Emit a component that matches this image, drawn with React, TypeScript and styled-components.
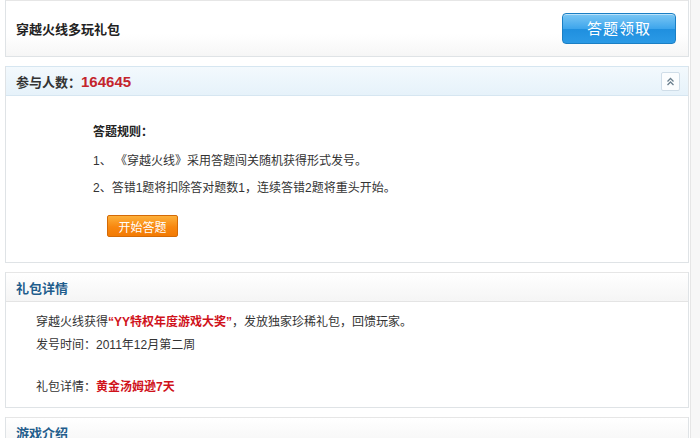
import React from "react";
import styled, { createGlobalStyle } from "styled-components";

const Global = createGlobalStyle`
  html, body { margin: 0; padding: 0; background: #fff; }
  body {
    font-family: "Liberation Sans", "Noto Sans CJK SC", sans-serif;
    font-size: 12px;
    color: #333;
  }
`;

const Page = styled.div`
  display: flex;
  width: 700px;
  height: 438px;
  overflow: hidden;
`;

const Main = styled.div`
  width: 684px;
  padding: 0 0 0 5px;
  display: flex;
  flex-direction: column;
  gap: 9px;
`;

const Side = styled.div`
  flex: 1;
  margin-left: 1px;
  border-left: 1px solid #e6e6e6;
  background: #f7f7f7;
`;

const Panel = styled.section`
  border: 1px solid #dfe3e6;
  border-top: none;
  background: #fff;
`;

const TopBar = styled.div`
  height: 55px;
  display: flex;
  align-items: center;
  justify-content: space-between;
  padding: 0 12px 0 10px;
  background: linear-gradient(#ffffff 60%, #f6f6f6);
  border-top: 1px solid #e6e6e6;
`;

const Title = styled.h1`
  margin: 0;
  font-size: 13px;
  font-weight: bold;
  color: #222;
`;

const BlueButton = styled.button`
  width: 114px;
  height: 31px;
  border: 1px solid #1b7fc4;
  border-radius: 4px;
  background: linear-gradient(#7cc7f4, #3ea6ec 50%, #1f8fdf 51%, #2b9ae6);
  color: #fff;
  font-family: inherit;
  font-size: 15px;
  letter-spacing: 1px;
  padding: 0 0 2px;
  box-shadow: inset 0 1px 0 rgba(255,255,255,0.5);
`;

const Header = styled.div<{ $tone: "blue" | "gray" }>`
  height: 28px;
  display: flex;
  align-items: center;
  justify-content: space-between;
  padding: 0 8px 0 10px;
  border-top: 1px solid ${(p) => (p.$tone === "blue" ? "#d6e6f1" : "#e6e6e6")};
  border-bottom: 1px solid ${(p) => (p.$tone === "blue" ? "#d6e6f1" : "#e4e4e4")};
  background: ${(p) =>
    p.$tone === "blue"
      ? "linear-gradient(#f3f9fd, #e6f2fa)"
      : "linear-gradient(#ffffff, #f5f5f5)"};
`;

const HeadText = styled.h2<{ $blue?: boolean }>`
  margin: 0;
  font-size: 13px;
  font-weight: bold;
  color: ${(p) => (p.$blue ? "#1f5d8c" : "#333")};
`;

const Count = styled.span`
  color: #c4242c;
  font-family: "Liberation Sans", sans-serif;
  font-size: 15px;
`;

const Toggle = styled.button`
  width: 19px;
  height: 19px;
  padding: 0;
  border: 1px solid #cfdde8;
  border-radius: 2px;
  background: #fbfdfe;
  display: flex;
  align-items: center;
  justify-content: center;
`;

const RuleBody = styled.div`
  padding: 25px 0 25px 87px;
  display: flex;
  flex-direction: column;
`;

const RuleTitle = styled.div`
  font-weight: bold;
  color: #222;
  line-height: 22px;
  margin-bottom: 5px;
`;

const Line = styled.p`
  margin: 0;
  line-height: 27px;
  color: #333;
`;

const OrangeButton = styled.button`
  align-self: flex-start;
  margin: 13px 0 0 14px;
  width: 71px;
  height: 22px;
  border: 1px solid #d46a06;
  border-radius: 2px;
  background: linear-gradient(#fdb03a, #f8870f 55%, #f27a04);
  color: #fff;
  font-family: inherit;
  font-size: 12px;
  padding: 0;
`;

const DetailBody = styled.div`
  padding: 9px 0 8px 30px;
`;

const DLine = styled.p<{ $gap?: boolean }>`
  margin: ${(p) => (p.$gap ? "19px 0 0" : "0")};
  line-height: 23px;
  color: #333;
`;

const Red = styled.b`
  color: #d0121b;
`;

export default function App() {
  return (
    <>
      <Global />
      <Page>
        <Main>
          <Panel>
            <TopBar>
              <Title>穿越火线多玩礼包</Title>
              <BlueButton>答题领取</BlueButton>
            </TopBar>
          </Panel>
          <Panel>
            <Header $tone="blue">
              <HeadText>
                参与人数：<Count>164645</Count>
              </HeadText>
              <Toggle aria-label="收起">
                <svg width="9" height="9" viewBox="0 0 9 9" fill="none" stroke="#6a7f8e" strokeWidth="1.3">
                  <path d="M1.5 4.5 L4.5 1.5 L7.5 4.5" />
                  <path d="M1.5 8 L4.5 5 L7.5 8" />
                </svg>
              </Toggle>
            </Header>
            <RuleBody>
              <RuleTitle>答题规则：</RuleTitle>
              <Line>1、 《穿越火线》采用答题闯关随机获得形式发号。</Line>
              <Line>2、答错1题将扣除答对题数1，连续答错2题将重头开始。</Line>
              <OrangeButton>开始答题</OrangeButton>
            </RuleBody>
          </Panel>
          <Panel>
            <Header $tone="gray">
              <HeadText $blue>礼包详情</HeadText>
            </Header>
            <DetailBody>
              <DLine>
                穿越火线获得<Red>“YY特权年度游戏大奖”</Red>，发放独家珍稀礼包，回馈玩家。
              </DLine>
              <DLine>发号时间：2011年12月第二周</DLine>
              <DLine $gap>
                礼包详情：<Red>黄金汤姆逊7天</Red>
              </DLine>
            </DetailBody>
          </Panel>
          <Panel>
            <Header $tone="gray">
              <HeadText $blue>游戏介绍</HeadText>
            </Header>
          </Panel>
        </Main>
        <Side />
      </Page>
    </>
  );
}
